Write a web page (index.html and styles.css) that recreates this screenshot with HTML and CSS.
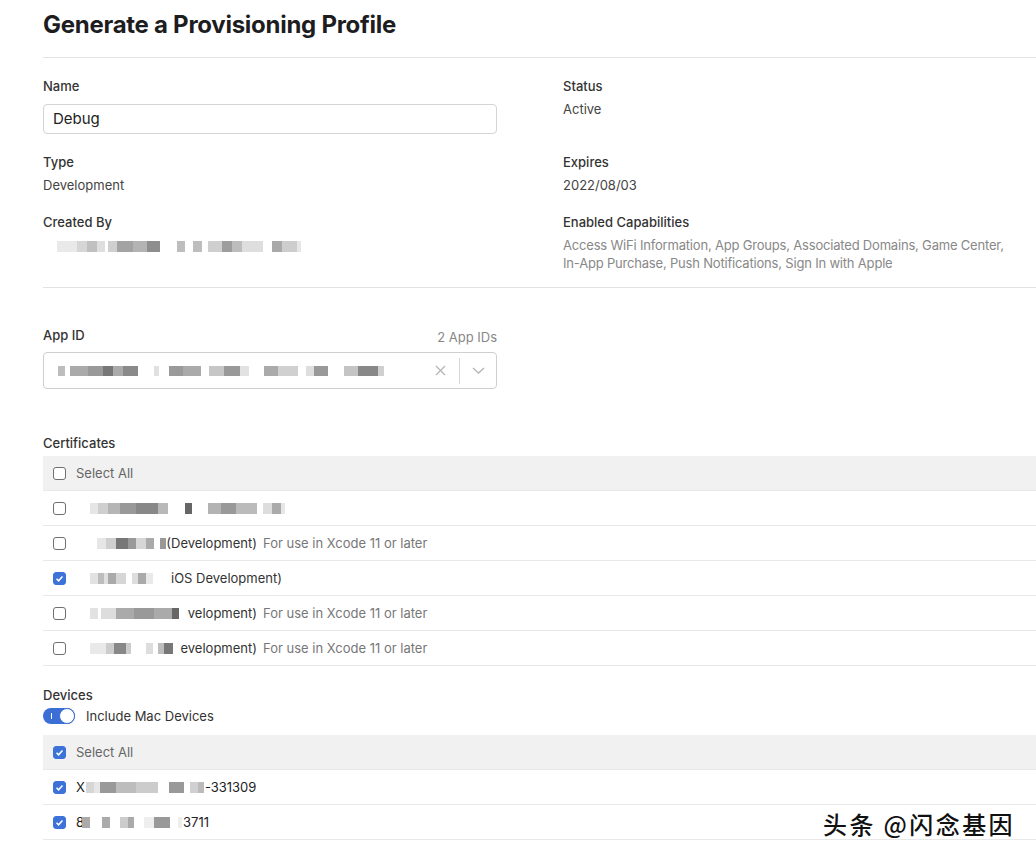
FILE: index.html
```html
<!DOCTYPE html>
<html lang="en">
<head>
<meta charset="utf-8">
<title>Generate a Provisioning Profile</title>
<link rel="stylesheet" href="styles.css">
</head>
<body>
<div class="page">
  <header class="head">
    <h1 class="title">Generate a Provisioning Profile</h1>
  </header>

  <section class="info">
    <div class="field">
      <div class="label">Name</div>
      <div class="input">Debug</div>
    </div>
    <div class="field">
      <div class="label">Status</div>
      <div class="value">Active</div>
    </div>
    <div class="field">
      <div class="label">Type</div>
      <div class="value">Development</div>
    </div>
    <div class="field">
      <div class="label">Expires</div>
      <div class="value">2022/08/03</div>
    </div>
    <div class="field">
      <div class="label">Created By</div>
      <div class="mz mz-created"></div>
    </div>
    <div class="field">
      <div class="label">Enabled Capabilities</div>
      <div class="caps">Access WiFi Information, App Groups, Associated Domains, Game Center,<br>In-App Purchase, Push Notifications, Sign In with Apple</div>
    </div>
  </section>

  <section class="appid">
    <div class="appid-head">
      <span class="label">App ID</span>
      <span class="count">2 App IDs</span>
    </div>
    <div class="select">
      <span class="mz mz-app"></span>
      <span class="select-icons">
        <svg class="ico-x" width="11" height="11" viewBox="0 0 11 11"><path d="M1 1L10 10M10 1L1 10" stroke="#b5b5b5" stroke-width="1.3" fill="none"/></svg>
        <span class="sep"></span>
        <svg class="ico-chev" width="13" height="7" viewBox="0 0 13 7"><path d="M1 1l5.5 5 5.5-5" fill="none" stroke="#b5b5b5" stroke-width="1.3"/></svg>
      </span>
    </div>
  </section>

  <section class="list-sec certs">
    <div class="label">Certificates</div>
    <div class="table">
      <div class="row row-head"><span class="cb"></span><span class="muted">Select All</span></div>
      <div class="row"><span class="cb"></span><span class="mz mz-c1"></span></div>
      <div class="row"><span class="cb"></span><span class="cname"><span class="mz mz-c2"></span><span>(Development)</span></span><span class="note">For use in Xcode 11 or later</span></div>
      <div class="row"><span class="cb on"><svg viewBox="0 0 13 13"><path d="M3 6.8l2.4 2.4L10 4" fill="none" stroke="#fff" stroke-width="1.8"/></svg></span><span class="mz mz-c3"></span><span>iOS Development)</span></div>
      <div class="row"><span class="cb"></span><span class="cname"><span class="mz mz-c4"></span><span>velopment)</span></span><span class="note">For use in Xcode 11 or later</span></div>
      <div class="row"><span class="cb"></span><span class="cname"><span class="mz mz-c5"></span><span>evelopment)</span></span><span class="note">For use in Xcode 11 or later</span></div>
    </div>
  </section>

  <section class="list-sec devices">
    <div class="label">Devices</div>
    <div class="toggle-row">
      <span class="toggle"><span class="tick"></span><span class="knob"></span></span>
      <span class="toggle-text">Include Mac Devices</span>
    </div>
    <div class="table dev-table">
      <div class="row row-head"><span class="cb on"><svg viewBox="0 0 13 13"><path d="M3 6.8l2.4 2.4L10 4" fill="none" stroke="#fff" stroke-width="1.8"/></svg></span><span class="muted">Select All</span></div>
      <div class="row dev"><span class="cb on"><svg viewBox="0 0 13 13"><path d="M3 6.8l2.4 2.4L10 4" fill="none" stroke="#fff" stroke-width="1.8"/></svg></span><span>X</span><span class="mz mz-d1"></span><span>-331309</span></div>
      <div class="row dev"><span class="cb on"><svg viewBox="0 0 13 13"><path d="M3 6.8l2.4 2.4L10 4" fill="none" stroke="#fff" stroke-width="1.8"/></svg></span><span>8</span><span class="mz mz-d2"></span><span>3711</span></div>
    </div>
  </section>
</div>
<div class="watermark">头条 @闪念基因</div>
</body>
</html>
```

FILE: styles.css
```css
* { box-sizing: border-box; }
html, body { margin: 0; padding: 0; background: #fff; }
body {
  font-family: Inter, "Liberation Sans", sans-serif;
  font-size: 13px;
  line-height: 18px;
  color: #333;
  overflow: hidden;
  width: 1036px;
  height: 861px;
}
.page { padding-left: 43px; }

.head {
  height: 58px;
  border-bottom: 1px solid #e2e2e2;
  padding-top: 10px;
}
.title {
  margin: 0;
  font-size: 24px;
  line-height: 30px;
  font-weight: 700;
  color: #1d1d1f;
  letter-spacing: -0.27px;
}

.info {
  display: grid;
  grid-template-columns: 520px 1fr;
  row-gap: 19px;
  padding: 19px 0 15px;
  border-bottom: 1px solid #e2e2e2;
}
.label { font-weight: 500; color: #333; }
.value { margin-top: 5px; color: #444; }
.input {
  margin-top: 9px;
  width: 454px;
  height: 30px;
  border: 1px solid #d4d4d4;
  border-radius: 4px;
  padding: 0 9px;
  font-size: 15px;
  line-height: 28px;
  color: #222;
}
.caps { margin-top: 5px; color: #888; letter-spacing: -0.19px; }

.mz { display: inline-block; height: 11px; flex: none; }
.mz-created {
  margin-top: 10px;
  margin-left: 14px;
  width: 244px;
  background: linear-gradient(90deg, #e9e9e9 0 20px, #d6d6d6 20px 30px, #c0c0c0 30px 40px, #dedede 40px 48px, #fff 48px 51px, #cfcfcf 51px 60px, #a3a3a3 60px 76px, #b3b3b3 76px 90px, #8e8e8e 90px 103px, #fff 103px 120px, #bdbdbd 120px 128px, #fff 128px 136px, #bdbdbd 136px 145px, #fff 145px 151px, #cfcfcf 151px 165px, #9d9d9d 165px 175px, #bdbdbd 175px 185px, #dedede 185px 206px, #fff 206px 215px, #a9a9a9 215px 225px, #cdcdcd 225px 240px, #e6e6e6 240px 244px);
}

.appid { padding-top: 38px; width: 497px; }
.appid-head { display: flex; justify-content: space-between; align-items: flex-start; width: 454px; height: 18px; }
.count { color: #888; padding-top: 2px; }
.select {
  margin-top: 8px;
  width: 454px;
  height: 37px;
  border: 1px solid #cfcfcf;
  border-radius: 4px;
  display: flex;
  align-items: center;
  padding: 0 11px 0 14px;
}
.mz-app {
  width: 326px;
  height: 10px;
  background: linear-gradient(90deg, #bdbdbd 0 7px, #fff 7px 12px, #aaa 12px 30px, #999 30px 45px, #777 45px 55px, #aaa 55px 65px, #8a8a8a 65px 80px, #fff 80px 96px, #e0e0e0 96px 101px, #fff 101px 111px, #9a9a9a 111px 125px, #aaa 125px 143px, #fff 143px 151px, #c6c6c6 151px 166px, #999 166px 182px, #e2e2e2 182px 191px, #fff 191px 206px, #aaa 206px 220px, #d0d0d0 220px 240px, #fff 240px 248px, #dedede 248px 256px, #999 256px 270px, #fff 270px 286px, #c4c4c4 286px 300px, #888 300px 320px, #cfcfcf 320px 326px);
}
.select-icons { margin-left: auto; display: flex; align-items: center; }
.ico-x { display: block; }
.sep { width: 1px; height: 26px; background: #d6d6d6; margin: 0 12px 0 13px; }
.ico-chev { display: block; }

.list-sec .label { display: block; }
.certs { margin-top: 45px; }
.table { margin-top: 4px; }
.row {
  height: 35px;
  border-bottom: 1px solid #e8e8e8;
  display: flex;
  align-items: center;
  padding-left: 10px;
  color: #333;
  white-space: nowrap;
}
.row-head { background: #f1f1f1; }
.cb {
  width: 13px;
  height: 13px;
  border: 1px solid #6f6f6f;
  border-radius: 3px;
  margin-right: 10px;
  flex: none;
  display: flex;
  align-items: center;
  justify-content: center;
  background: #fff;
}
.cb.on { background: #3d73d8; border-color: #3d73d8; }
.cb svg { width: 13px; height: 13px; display: block; }
.muted { color: #666; }
.cname { display: flex; align-items: center; width: 181px; }
.cname .mz { flex: 1; }
.note { color: #777; margin-left: 6px; }

.mz-c1 {
  width: 209px;
  background: linear-gradient(90deg, #fff 0 14px, #e6e6e6 14px 22px, #cfcfcf 22px 32px, #b5b5b5 32px 44px, #999 44px 60px, #888 60px 82px, #b9b9b9 82px 92px, #fff 92px 109px, #666 109px 116px, #fff 116px 132px, #b3b3b3 132px 145px, #999 145px 160px, #bbb 160px 181px, #fff 181px 187px, #ddd 187px 196px, #aaa 196px 205px, #e6e6e6 205px 209px);
}
.mz-c2 {
  background: linear-gradient(90deg, #fff 0 21px, #e6e6e6 21px 30px, #cfcfcf 30px 40px, #777 40px 52px, #999 52px 60px, #d6d6d6 60px 70px, #aaa 70px 78px, #fff 78px 84px, #999 84px 92px);
}
.mz-c3 {
  width: 92px;
  margin-right: 3px;
  background: linear-gradient(90deg, #fff 0 14px, #e2e2e2 14px 22px, #bdbdbd 22px 28px, #e0e0e0 28px 32px, #aaa 32px 40px, #d6d6d6 40px 50px, #fff 50px 56px, #ddd 56px 62px, #aaa 62px 70px, #e9e9e9 70px 77px, #fff 77px 92px);
}
.mz-c4 {
  background: linear-gradient(90deg, #fff 0 14px, #e2e2e2 14px 22px, #fff 22px 25px, #ddd 25px 40px, #aaa 40px 58px, #999 58px 78px, #aaa 78px 96px, #666 96px 103px, #fff 103px 109px);
}
.mz-c5 {
  background: linear-gradient(90deg, #fff 0 14px, #e9e9e9 14px 30px, #ccc 30px 38px, #888 38px 50px, #ccc 50px 55px, #fff 55px 70px, #ddd 70px 77px, #fff 77px 82px, #bdbdbd 82px 88px, #777 88px 97px, #fff 97px 102px);
}

.devices { margin-top: 20px; }
.toggle-row { margin-top: 4px; height: 16px; display: flex; align-items: center; }
.toggle {
  width: 32px;
  height: 16px;
  border-radius: 8px;
  background: #3b6fd6;
  display: flex;
  align-items: center;
  justify-content: space-between;
  padding-left: 8px;
  flex: none;
}
.tick { width: 1px; height: 6px; background: #fff; }
.knob {
  width: 16px;
  height: 16px;
  border-radius: 50%;
  background: #fff;
  border: 1.5px solid #3b6fd6;
}
.toggle-text { margin-left: 11px; color: #333; }
.dev-table { margin-top: 11px; }
.dev { color: #222; }
.mz-d1 {
  width: 118px;
  margin: 0 1px;
  background: linear-gradient(90deg, #d6d6d6 0 8px, #e6e6e6 8px 14px, #999 14px 30px, #bdbdbd 30px 50px, #ccc 50px 72px, #fff 72px 83px, #999 83px 98px, #fff 98px 104px, #d0d0d0 104px 112px, #bbb 112px 118px);
}
.mz-d2 {
  width: 100px;
  margin: 0 1px 0 -2px;
  background: linear-gradient(90deg, #aaa 0 8px, #fff 8px 20px, #aaa 20px 28px, #fff 28px 38px, #ccc 38px 46px, #aaa 46px 52px, #fff 52px 62px, #eee 62px 72px, #999 72px 88px, #fff 88px 96px, #eee 96px 100px);
}

.watermark {
  position: absolute;
  left: 823px;
  top: 809px;
  font-family: "Noto Sans CJK SC", sans-serif;
  font-size: 24px;
  line-height: 30px;
  font-weight: 500;
  letter-spacing: 2.4px;
  color: #111;
  text-shadow: 0 0 2px #fff, 0 0 2px #fff;
  white-space: nowrap;
}
```
